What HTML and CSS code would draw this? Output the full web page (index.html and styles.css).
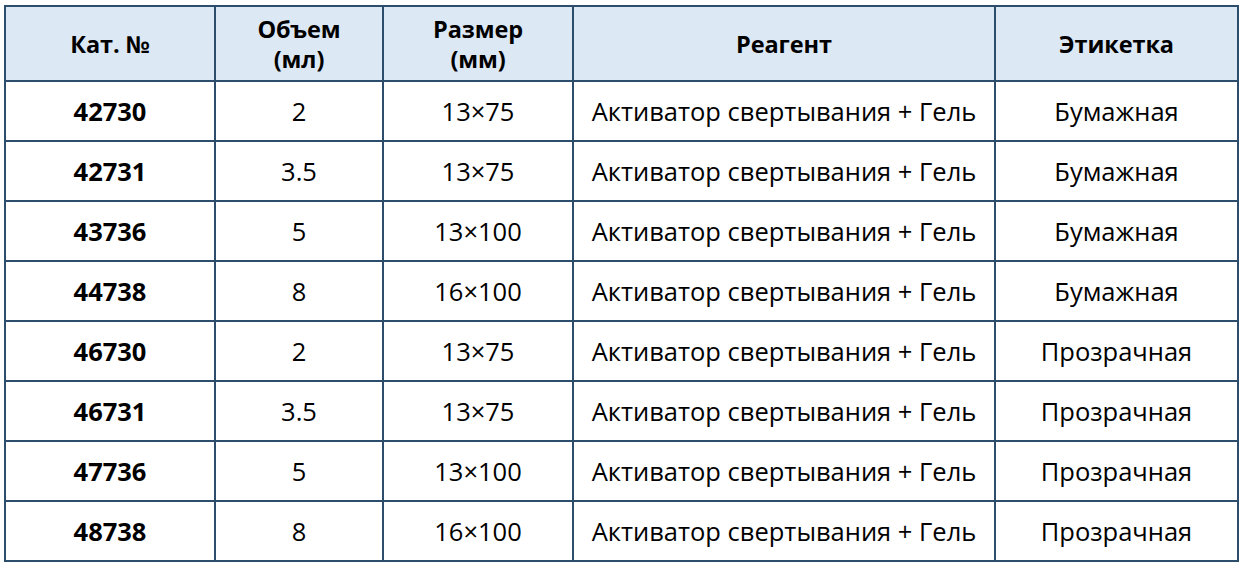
FILE: index.html
```html
<!DOCTYPE html>
<html lang="ru">
<head>
<meta charset="utf-8">
<title>Таблица</title>
<link rel="stylesheet" href="styles.css">
</head>
<body>
<table class="grid">
  <colgroup>
    <col class="c1"><col class="c2"><col class="c3"><col class="c4"><col class="c5">
  </colgroup>
  <thead>
    <tr><th>Кат. №</th><th>Объем<br>(мл)</th><th>Размер<br>(мм)</th><th>Реагент</th><th>Этикетка</th></tr>
  </thead>
  <tbody>
    <tr><td class="cat">42730</td><td>2</td><td>13×75</td><td>Активатор свертывания + Гель</td><td>Бумажная</td></tr>
    <tr><td class="cat">42731</td><td>3.5</td><td>13×75</td><td>Активатор свертывания + Гель</td><td>Бумажная</td></tr>
    <tr><td class="cat">43736</td><td>5</td><td>13×100</td><td>Активатор свертывания + Гель</td><td>Бумажная</td></tr>
    <tr><td class="cat">44738</td><td>8</td><td>16×100</td><td>Активатор свертывания + Гель</td><td>Бумажная</td></tr>
    <tr><td class="cat">46730</td><td>2</td><td>13×75</td><td>Активатор свертывания + Гель</td><td>Прозрачная</td></tr>
    <tr><td class="cat">46731</td><td>3.5</td><td>13×75</td><td>Активатор свертывания + Гель</td><td>Прозрачная</td></tr>
    <tr><td class="cat">47736</td><td>5</td><td>13×100</td><td>Активатор свертывания + Гель</td><td>Прозрачная</td></tr>
    <tr><td class="cat">48738</td><td>8</td><td>16×100</td><td>Активатор свертывания + Гель</td><td>Прозрачная</td></tr>
  </tbody>
</table>
</body>
</html>
```
FILE: styles.css
```css
html, body { background: #ffffff; }
body {
  margin: 0;
  padding: 5px 0 0 4px;
  font-family: "Open Sans", "Noto Sans", sans-serif;
  color: #000;
}
.grid {
  border-collapse: collapse;
  table-layout: fixed;
  width: 1233px;
}
.c1 { width: 210px; }
.c2 { width: 168px; }
.c3 { width: 190px; }
.c4 { width: 422px; }
.c5 { width: 243px; }
.grid th, .grid td {
  border: 2px solid #2d4d6d;
  text-align: center;
  vertical-align: middle;
  padding: 0;
}
.grid th {
  background: #dde8f5;
  height: 73px;
  font-size: 23.5px;
  font-weight: 700;
  line-height: 30px;
  letter-spacing: -0.1px;
}
.grid td {
  height: 58px;
  font-size: 25.5px;
  font-weight: 400;
  line-height: 30px;
}
.grid td.cat { font-weight: 700; }
```
